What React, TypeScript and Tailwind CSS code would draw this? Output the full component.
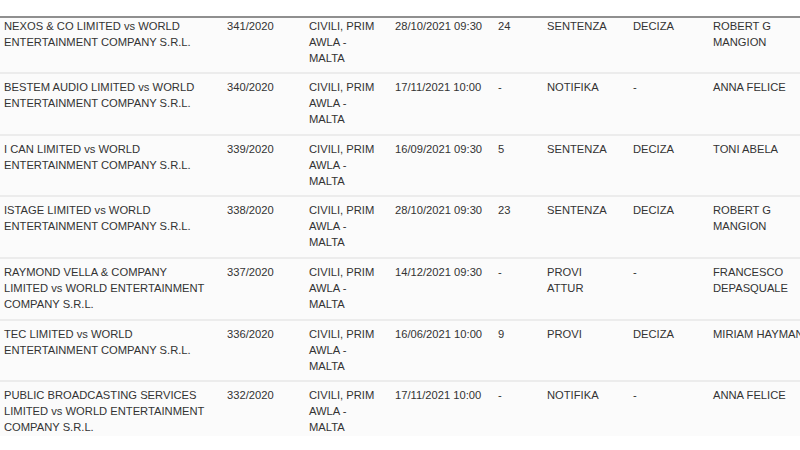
const rows: string[][][] = [
  [['NEXOS & CO LIMITED vs WORLD', 'ENTERTAINMENT COMPANY S.R.L.'], ['341/2020'], ['CIVILI, PRIM', 'AWLA -', 'MALTA'], ['28/10/2021 09:30'], ['24'], ['SENTENZA'], ['DECIZA'], ['ROBERT G', 'MANGION']],
  [['BESTEM AUDIO LIMITED vs WORLD', 'ENTERTAINMENT COMPANY S.R.L.'], ['340/2020'], ['CIVILI, PRIM', 'AWLA -', 'MALTA'], ['17/11/2021 10:00'], ['-'], ['NOTIFIKA'], ['-'], ['ANNA FELICE']],
  [['I CAN LIMITED vs WORLD', 'ENTERTAINMENT COMPANY S.R.L.'], ['339/2020'], ['CIVILI, PRIM', 'AWLA -', 'MALTA'], ['16/09/2021 09:30'], ['5'], ['SENTENZA'], ['DECIZA'], ['TONI ABELA']],
  [['ISTAGE LIMITED vs WORLD', 'ENTERTAINMENT COMPANY S.R.L.'], ['338/2020'], ['CIVILI, PRIM', 'AWLA -', 'MALTA'], ['28/10/2021 09:30'], ['23'], ['SENTENZA'], ['DECIZA'], ['ROBERT G', 'MANGION']],
  [['RAYMOND VELLA & COMPANY', 'LIMITED vs WORLD ENTERTAINMENT', 'COMPANY S.R.L.'], ['337/2020'], ['CIVILI, PRIM', 'AWLA -', 'MALTA'], ['14/12/2021 09:30'], ['-'], ['PROVI', 'ATTUR'], ['-'], ['FRANCESCO', 'DEPASQUALE']],
  [['TEC LIMITED vs WORLD', 'ENTERTAINMENT COMPANY S.R.L.'], ['336/2020'], ['CIVILI, PRIM', 'AWLA -', 'MALTA'], ['16/06/2021 10:00'], ['9'], ['PROVI'], ['DECIZA'], ['MIRIAM HAYMAN']],
  [['PUBLIC BROADCASTING SERVICES', 'LIMITED vs WORLD ENTERTAINMENT', 'COMPANY S.R.L.'], ['332/2020'], ['CIVILI, PRIM', 'AWLA -', 'MALTA'], ['17/11/2021 10:00'], ['-'], ['NOTIFIKA'], ['-'], ['ANNA FELICE']],
];

const App = () => {
  return (
    <div className="w-[800px] h-[450px] overflow-hidden bg-white font-['Liberation_Sans',Arial,sans-serif] text-[11.2px] leading-[16px] text-[#333]">
      <div className="h-[16px]" />
      <div className="w-[920px] border-t-2 border-[#8f8f8f]">
        {rows.map((row, i) => (
          <div
            key={i}
            className={`grid grid-cols-[223px_82px_86px_103px_49px_86px_80px_180px] bg-[#fbfbfb] ${
              i === 0 ? 'h-[54px]' : i === rows.length - 1 ? 'h-[56px] pt-[5px] border-t-2 border-[#ececec]' : 'h-[61.67px] pt-[5px] border-t-2 border-[#ececec]'
            }`}
          >
            {row.map((cell, j) => (
              <div key={j} className="pl-1 whitespace-nowrap">
                {cell.map((line, k) => (
                  <div key={k}>{line}</div>
                ))}
              </div>
            ))}
          </div>
        ))}
      </div>
    </div>
  );
};

export default App;
